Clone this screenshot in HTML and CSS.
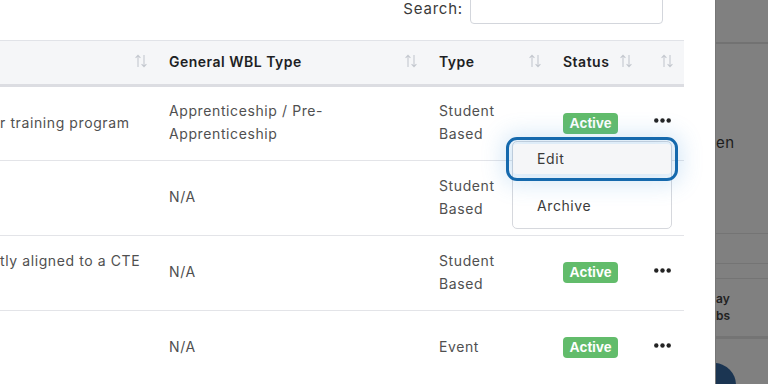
FILE: index.html
```html
<!DOCTYPE html>
<html lang="en">
<head>
    <meta charset="UTF-8">
    <meta name="viewport" content="width=device-width, initial-scale=1.0">
    <title>Work-Based Learning</title>
    <link rel="stylesheet" href="styles.css">
</head>
<body>
    <div class="modal">
        <div class="search-row">
            <label for="search">Search:</label>
            <input type="text" id="search" class="search-input">
        </div>

        <table class="grid">
            <colgroup>
                <col class="w-desc">
                <col class="w-general">
                <col class="w-type">
                <col class="w-status">
                <col class="w-actions">
            </colgroup>
            <thead>
                <tr>
                    <th class="first">
                        <svg class="sort" width="12" height="14" viewBox="0 0 12 14"><path d="M3 13V1.5M0.6 3.8L3 1.4l2.4 2.4M9 1v11.5M6.6 10.2L9 12.6l2.4-2.4"/></svg>
                    </th>
                    <th>General WBL Type
                        <svg class="sort" width="12" height="14" viewBox="0 0 12 14"><path d="M3 13V1.5M0.6 3.8L3 1.4l2.4 2.4M9 1v11.5M6.6 10.2L9 12.6l2.4-2.4"/></svg>
                    </th>
                    <th>Type
                        <svg class="sort" width="12" height="14" viewBox="0 0 12 14"><path d="M3 13V1.5M0.6 3.8L3 1.4l2.4 2.4M9 1v11.5M6.6 10.2L9 12.6l2.4-2.4"/></svg>
                    </th>
                    <th>Status
                        <svg class="sort" width="12" height="14" viewBox="0 0 12 14"><path d="M3 13V1.5M0.6 3.8L3 1.4l2.4 2.4M9 1v11.5M6.6 10.2L9 12.6l2.4-2.4"/></svg>
                    </th>
                    <th class="last">
                        <svg class="sort" width="12" height="14" viewBox="0 0 12 14"><path d="M3 13V1.5M0.6 3.8L3 1.4l2.4 2.4M9 1v11.5M6.6 10.2L9 12.6l2.4-2.4"/></svg>
                    </th>
                </tr>
            </thead>
            <tbody>
                <tr>
                    <td class="first">r training program</td>
                    <td>Apprenticeship / Pre-Apprenticeship</td>
                    <td>Student Based</td>
                    <td><span class="badge">Active</span></td>
                    <td class="actions">
                        <svg class="dots" width="17" height="5" viewBox="0 0 17 5"><circle cx="2.3" cy="2.5" r="2.2"/><circle cx="8.5" cy="2.5" r="2.2"/><circle cx="14.7" cy="2.5" r="2.2"/></svg>
                        <ul class="menu">
                            <li class="menu-item focused">Edit</li>
                            <li class="menu-item">Archive</li>
                        </ul>
                    </td>
                </tr>
                <tr>
                    <td class="first"></td>
                    <td>N/A</td>
                    <td>Student Based</td>
                    <td></td>
                    <td class="actions"></td>
                </tr>
                <tr>
                    <td class="first">tly aligned to a CTE<br>&nbsp;</td>
                    <td>N/A</td>
                    <td>Student Based</td>
                    <td><span class="badge">Active</span></td>
                    <td class="actions">
                        <svg class="dots" width="17" height="5" viewBox="0 0 17 5"><circle cx="2.3" cy="2.5" r="2.2"/><circle cx="8.5" cy="2.5" r="2.2"/><circle cx="14.7" cy="2.5" r="2.2"/></svg>
                    </td>
                </tr>
                <tr>
                    <td class="first"></td>
                    <td>N/A</td>
                    <td>Event</td>
                    <td><span class="badge">Active</span></td>
                    <td class="actions">
                        <svg class="dots" width="17" height="5" viewBox="0 0 17 5"><circle cx="2.3" cy="2.5" r="2.2"/><circle cx="8.5" cy="2.5" r="2.2"/><circle cx="14.7" cy="2.5" r="2.2"/></svg>
                    </td>
                </tr>
            </tbody>
        </table>
    </div>

    <!-- page behind the modal, dimmed by the backdrop -->
    <div class="backdrop">
        <div class="bg-header"></div>
        <div class="bg-title">en</div>
        <div class="bg-rule"></div>
        <div class="bg-rule mid"></div>
        <div class="bg-rule short"></div>
        <div class="bg-label">ay<br>bs</div>
        <div class="bg-footer">
            <span class="bg-avatar"></span>
        </div>
    </div>
</body>
</html>
```

FILE: styles.css
```css
* {
    box-sizing: border-box;
}
body {
    display: flex;
    margin: 0;
    height: 384px;
    overflow: hidden;
    font-family: 'Inter', 'Open Sans', sans-serif;
    font-size: 14px;
    letter-spacing: 0.6px;
    color: #505050;
    background-color: #808080;
}

/* modal panel */
.modal {
    width: 715px;
    flex-shrink: 0;
    background-color: white;
    overflow: hidden;
}
.search-row {
    display: flex;
    align-items: center;
    justify-content: flex-end;
    gap: 7px;
    height: 31px;
    margin-top: -7px;
    margin-bottom: 16px;
    width: 684px;
    padding-right: 21px;
}
.search-row label {
    color: #3a3a3a;
    font-size: 15px;
    letter-spacing: 0.8px;
}
.search-input {
    width: 193px;
    height: 31px;
    border: 1px solid #d3d6dc;
    border-radius: 4px;
}

/* table */
.grid {
    width: 684px;
    table-layout: fixed;
    border-collapse: collapse;
}
.w-desc { width: 153px; }
.w-general { width: 270px; }
.w-type { width: 124px; }
.w-status { width: 91px; }
.w-actions { width: 46px; }

.grid th {
    position: relative;
    height: 45px;
    padding: 0 16px 3px;
    text-align: left;
    font-weight: 600;
    letter-spacing: 0.5px;
    color: #1e1f24;
    background-color: #f5f6f8;
    border-top: 1px solid #e1e3e8;
    border-bottom: 3px solid #dcdde2;
}
.sort {
    position: absolute;
    right: 6px;
    top: 13px;
    fill: none;
    stroke: #c4c8cf;
    stroke-width: 1.1;
}
.grid th.last .sort {
    right: 11px;
}
.grid td {
    height: 75px;
    padding: 0 16px 3px;
    line-height: 23px;
    vertical-align: middle;
    border-bottom: 1px solid #e3e4e8;
}
.grid .first {
    padding-left: 0;
    white-space: nowrap;
}
.badge {
    display: inline-block;
    width: 55px;
    height: 21px;
    line-height: 21px;
    text-align: center;
    font-family: 'Liberation Sans', Arial, sans-serif;
    font-weight: 700;
    font-size: 14px;
    letter-spacing: 0;
    color: white;
    background-color: #62bc6b;
    border-radius: 4px;
    vertical-align: middle;
}
.actions {
    position: relative;
}
.dots {
    display: block;
    fill: #232323;
    margin-top: -3px;
}

/* open row menu */
.menu {
    position: absolute;
    left: -126px;
    top: 54px;
    width: 160px;
    margin: 0;
    padding: 2px 0 7px;
    list-style: none;
    background-color: white;
    border: 1px solid #d6d8dd;
    border-radius: 5px;
    z-index: 3;
}
.menu-item {
    height: 30px;
    line-height: 30px;
    padding-left: 24px;
    color: #3a3a3a;
}
.menu-item + .menu-item {
    margin-top: 17px;
}
.menu-item.focused {
    background-color: #f5f6f8;
    border-radius: 4px;
    outline: 3px solid #1569ad;
    outline-offset: 4px;
    box-shadow: 0 0 22px 10px rgba(70, 150, 220, 0.22);
}

/* dimmed page behind */
.backdrop {
    flex: 1;
    display: flex;
    flex-direction: column;
    border-left: 1px solid #767676;
    color: #1c1c1c;
    overflow: hidden;
}
.backdrop > * {
    flex-shrink: 0;
}
.bg-header {
    height: 44px;
    border-bottom: 2px solid #727272;
}
.bg-title {
    margin-top: 89px;
    font-size: 15px;
    line-height: 20px;
}
.bg-rule {
    margin-top: 80px;
    border-bottom: 1px solid #747474;
}
.bg-rule.mid {
    margin-top: 29px;
}
.bg-rule.short {
    margin-top: 14px;
}
.bg-label {
    margin-top: 11px;
    font-size: 12px;
    font-weight: 600;
    letter-spacing: 0;
    line-height: 17px;
    color: #222;
}
.bg-footer {
    margin-top: 12px;
    height: 60px;
    border-top: 3px solid #747474;
}
.bg-avatar {
    display: block;
    width: 44px;
    height: 44px;
    margin: 24px 0 0 -24px;
    border-radius: 50%;
    background-color: #1b3552;
}
```
